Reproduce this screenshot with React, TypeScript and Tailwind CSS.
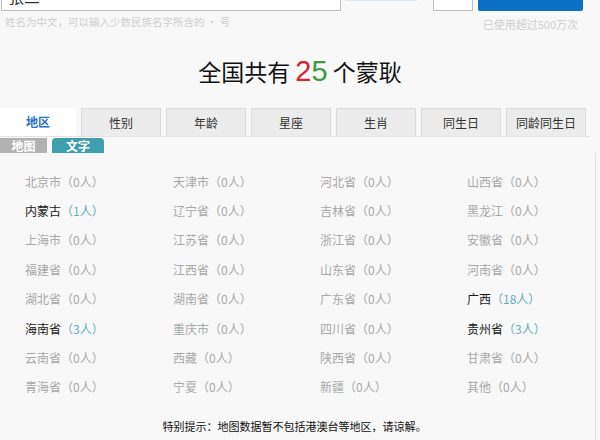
import React from "react";

type Region = { name: string; count: number };

const regions: Region[] = [
  { name: "北京市", count: 0 },
  { name: "天津市", count: 0 },
  { name: "河北省", count: 0 },
  { name: "山西省", count: 0 },
  { name: "内蒙古", count: 1 },
  { name: "辽宁省", count: 0 },
  { name: "吉林省", count: 0 },
  { name: "黑龙江", count: 0 },
  { name: "上海市", count: 0 },
  { name: "江苏省", count: 0 },
  { name: "浙江省", count: 0 },
  { name: "安徽省", count: 0 },
  { name: "福建省", count: 0 },
  { name: "江西省", count: 0 },
  { name: "山东省", count: 0 },
  { name: "河南省", count: 0 },
  { name: "湖北省", count: 0 },
  { name: "湖南省", count: 0 },
  { name: "广东省", count: 0 },
  { name: "广西", count: 18 },
  { name: "海南省", count: 3 },
  { name: "重庆市", count: 0 },
  { name: "四川省", count: 0 },
  { name: "贵州省", count: 3 },
  { name: "云南省", count: 0 },
  { name: "西藏", count: 0 },
  { name: "陕西省", count: 0 },
  { name: "甘肃省", count: 0 },
  { name: "青海省", count: 0 },
  { name: "宁夏", count: 0 },
  { name: "新疆", count: 0 },
  { name: "其他", count: 0 },
];

const tabs = ["性别", "年龄", "星座", "生肖", "同生日", "同龄同生日"];

function RegionCell({ r }: { r: Region }) {
  const active = r.count > 0;
  return (
    <div className="h-[29.4px] flex items-center whitespace-nowrap">
      <span className={active ? "text-[#1a1a1a]" : "text-[#a8a8a8]"}>{r.name}</span>
      <span className={active ? "text-[#5fafbd]" : "text-[#a8a8a8]"}>（{r.count}人）</span>
    </div>
  );
}

export default function App() {
  return (
    <div
      className="w-[600px] h-[440px] overflow-hidden bg-[#f8f8f8]"
      style={{ fontFamily: '"Noto Sans CJK SC", "Noto Sans", sans-serif' }}
    >
      {/* search bar, cut off at the top */}
      <div className="flex items-end">
        <div className="ml-[1px] w-[340px] h-[32px] -mt-[22px] bg-white border border-[#bdbdbd] flex items-end pl-[6px] pb-[6px] text-[16px] text-[#333] leading-none">
          张三
        </div>
        <div className="ml-[4px] w-[73px] h-[20px] -mt-[19px] self-start bg-[#d9e8f6] rounded-b-[2px]" />
        <div className="ml-[15px] w-[40px] h-[32px] -mt-[22px] bg-white border border-[#bdbdbd]" />
        <div className="ml-[5px] w-[105px] h-[32px] -mt-[21px] bg-[#0b6fc3] rounded-b-[2px]" />
      </div>

      <div className="mt-[4px] flex justify-between pl-[5px] pr-[22px] text-[10.5px] leading-[14px] text-[#cfcfcf]">
        <span>姓名为中文，可以输入少数民族名字所含的 · 号</span>
        <span className="mt-[2px] text-[11px]">已使用超过500万次</span>
      </div>

      <div className="mt-[24px] text-center text-[23px] leading-[32px] text-[#111]">
        全国共有{" "}
        <span
          className="text-[29px]"
          style={{ fontFamily: '"Liberation Sans", Arial, sans-serif' }}
        >
          <span className="text-[#d8232f]">2</span>
          <span className="text-[#3b9a3e]">5</span>
        </span>{" "}
        个蒙耿
      </div>

      {/* tabs */}
      <div className="mt-[21px] w-[590px] flex gap-[5px] border-b border-[#e4e4e4] text-[12px]">
        <div className="w-[76px] h-[28px] -mb-[1px] bg-white flex items-center justify-center text-[#2a6fc9] font-bold">
          地区
        </div>
        {tabs.map((t) => (
          <div
            key={t}
            className="w-[80px] h-[28px] bg-[#ececec] border border-[#dcdcdc] border-b-0 flex items-center justify-center text-[#333]"
          >
            {t}
          </div>
        ))}
      </div>

      {/* sub tags */}
      <div className="mt-[1px] flex gap-[5px] text-[12px] font-bold text-white leading-none">
        <div className="w-[47px] h-[15px] bg-[#b2b2b2] flex items-center justify-center">地图</div>
        <div className="w-[52px] h-[15px] bg-[#3f9fad] rounded-t-[4px] flex items-center justify-center">
          文字
        </div>
      </div>

      {/* region list */}
      <div className="w-[596px] border-r border-[#dedede] pt-[14px] pl-[25px] text-[12px]">
        <div className="grid grid-cols-[148px_147px_147px_147px]">
          {regions.map((r) => (
            <RegionCell key={r.name} r={r} />
          ))}
        </div>
        <div className="mt-[16px] pb-[10px] text-center -ml-[25px] pr-[6px] text-[11px] leading-[16px] text-[#111]">
          特别提示：地图数据暂不包括港澳台等地区，请谅解。
        </div>
      </div>
    </div>
  );
}
